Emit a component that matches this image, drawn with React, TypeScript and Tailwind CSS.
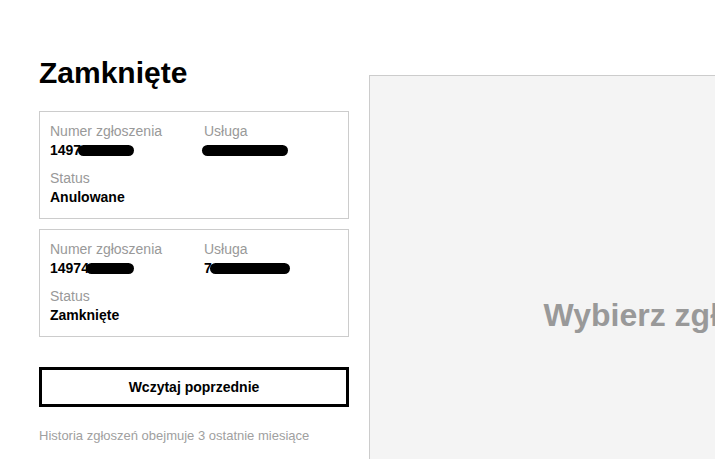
import React from 'react';

type Ticket = {
  id: string;
  idBlob: number;
  service: string;
  serviceBlob: number;
  status: string;
};

const tickets: Ticket[] = [
  { id: '1497', idBlob: 56, service: '', serviceBlob: 86, status: 'Anulowane' },
  { id: '14974', idBlob: 48, service: '7', serviceBlob: 80, status: 'Zamknięte' },
];

function Blob({ width }: { width: number }) {
  return (
    <span
      className="inline-block h-[11px] rounded-full bg-black align-[-1px]"
      style={{ width }}
    />
  );
}

function TicketCard({ t }: { t: Ticket }) {
  return (
    <div className="border border-[#cccccc] px-[10px] py-[11px]">
      <div className="flex">
        <div className="w-[154px]">
          <div className="text-[14px] leading-[16px] text-[#999999]">Numer zgłoszenia</div>
          <div className="mt-[2px] whitespace-nowrap text-[14px] font-bold leading-[19px] text-black">
            {t.id}
            <span className="-ml-[3px]">
              <Blob width={t.idBlob} />
            </span>
          </div>
        </div>
        <div>
          <div className="text-[14px] leading-[16px] text-[#999999]">Usługa</div>
          <div className="mt-[2px] whitespace-nowrap text-[14px] font-bold leading-[19px] text-black">
            {t.service}
            <span className="-ml-[2px]">
              <Blob width={t.serviceBlob} />
            </span>
          </div>
        </div>
      </div>
      <div className="mt-[10px] text-[14px] leading-[16px] text-[#999999]">Status</div>
      <div className="mt-[2px] text-[14px] font-bold leading-[19px] text-black">{t.status}</div>
    </div>
  );
}

export default function App() {
  return (
    <div className="h-screen w-full overflow-hidden bg-white font-['Liberation_Sans',Arial,sans-serif]">
      <div className="flex w-[1100px] pl-[39px] pt-[56px]">
        <div className="w-[310px] shrink-0">
          <h1 className="text-[30px] font-bold leading-[34px] text-black">Zamknięte</h1>
          <div className="mt-[21px] flex flex-col gap-[10px]">
            {tickets.map((t) => (
              <TicketCard key={t.id} t={t} />
            ))}
          </div>
          <button className="mt-[30px] h-[40px] w-full border-[3px] border-black bg-white text-[14px] font-bold text-black">
            Wczytaj poprzednie
          </button>
          <p className="mt-[21px] text-[13px] leading-[15px] text-[#a0a0a0]">
            Historia zgłoszeń obejmuje 3 ostatnie miesiące
          </p>
        </div>
        <div className="ml-[20px] mt-[19px] flex h-[478px] w-[641px] shrink-0 items-center justify-center border-l border-t border-[#cccccc] bg-[#f4f4f4]">
          <span className="text-[32px] font-bold text-[#999999]">Wybierz zgłoszenie</span>
        </div>
      </div>
    </div>
  );
}
